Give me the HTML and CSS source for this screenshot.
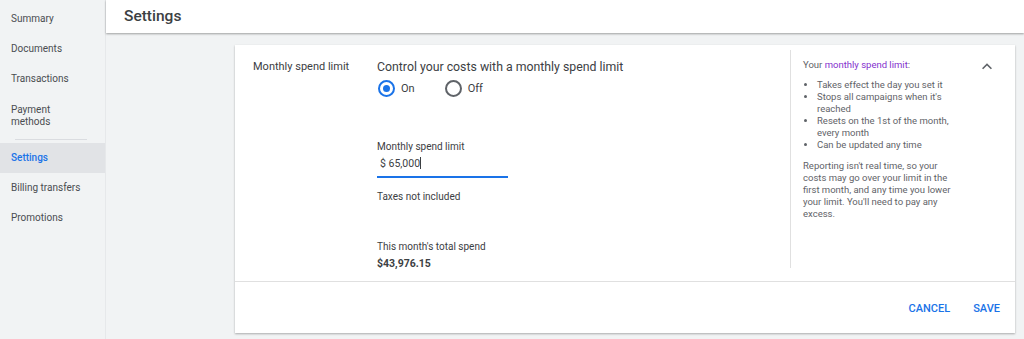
FILE: index.html
```html
<!DOCTYPE html>
<html lang="en">
<head>
    <meta charset="UTF-8">
    <title>Billing settings</title>
    <link rel="stylesheet" href="styles.css">
</head>
<body>
    <div class="sidebar">
        <a href="#" class="side-link">Summary</a>
        <a href="#" class="side-link">Documents</a>
        <a href="#" class="side-link">Transactions</a>
        <a href="#" class="side-link two-line">Payment<br>methods</a>
        <div class="side-sep"></div>
        <a href="#" class="side-link active">Settings</a>
        <a href="#" class="side-link">Billing transfers</a>
        <a href="#" class="side-link">Promotions</a>
    </div>
    <div class="main">
        <div class="header">Settings</div>
        <div class="content">
            <div class="card">
                <div class="card-body">
                    <div class="row-label">Monthly spend limit</div>
                    <div class="row-main">
                        <div class="lead">Control your costs with a monthly spend limit</div>
                        <div class="radios">
                            <label class="radio checked"><span class="dot"></span>On</label>
                            <label class="radio"><span class="dot"></span>Off</label>
                        </div>
                        <div class="field">
                            <div class="field-label">Monthly spend limit</div>
                            <div class="field-input">$ 65,000<span class="caret"></span></div>
                        </div>
                        <div class="hint">Taxes not included</div>
                        <div class="total-label">This month's total spend</div>
                        <div class="total">$43,976.15</div>
                    </div>
                    <div class="aside">
                        <div class="aside-title">Your <span class="accent">monthly spend limit</span>:</div>
                        <ul>
                            <li>Takes effect the day you set it</li>
                            <li>Stops all campaigns when it's reached</li>
                            <li>Resets on the 1st of the month, every month</li>
                            <li>Can be updated any time</li>
                        </ul>
                        <p>Reporting isn't real time, so your costs may go over your limit in the first month, and any time you lower your limit. You'll need to pay any excess.</p>
                    </div>
                    <div class="collapse">
                        <svg width="10" height="7" viewBox="0 0 12 8"><path d="M1.4 7.4 6 2.8l4.6 4.6L12 6 6 0 0 6z" fill="#5f6368"/></svg>
                    </div>
                </div>
                <div class="card-footer">
                    <a href="#" class="btn">CANCEL</a>
                    <a href="#" class="btn">SAVE</a>
                </div>
            </div>
        </div>
    </div>
</body>
</html>
```
FILE: styles.css
```css
body {
    margin: 0;
    font-family: Roboto, "Liberation Sans", sans-serif;
    background: #f1f3f4;
    color: #3c4043;
    display: flex;
    height: 339px;
    overflow: hidden;
}
.sidebar {
    width: 105px;
    border-right: 1px solid #e6e8ea;
    padding-top: 4px;
    display: flex;
    flex-direction: column;
}
.side-link {
    display: block;
    height: 30px;
    line-height: 30px;
    padding-left: 11px;
    font-size: 10px;
    color: #4a4d51;
    text-decoration: none;
}
.side-link.two-line {
    height: 32px;
    line-height: 12px;
    padding-top: 10px;
}
.side-link.active {
    background: #e1e3e6;
    color: #1a73e8;
    font-weight: 500;
}
.side-sep {
    height: 1px;
    background: #dadce0;
    margin: 3px 18px 3px 15px;
}
.main {
    flex: 1;
    display: flex;
    flex-direction: column;
}
.header {
    height: 33px;
    line-height: 32px;
    background: #fff;
    padding-left: 18px;
    font-size: 15.5px;
    font-weight: 500;
    color: #3c4043;
    box-shadow: 0 1px 2px rgba(0, 0, 0, 0.35);
}
.content {
    padding: 12px 9px 0 129px;
}
.card {
    background: #fff;
    box-shadow: 0 1px 2px rgba(0, 0, 0, 0.3);
}
.card-body {
    display: flex;
    height: 236px;
    border-bottom: 1px solid #e0e0e0;
}
.row-label {
    width: 124px;
    padding: 15px 0 0 18px;
    font-size: 11px;
    color: #3c4043;
}
.row-main {
    width: 413px;
    padding-top: 15px;
    font-size: 10px;
}
.lead {
    font-size: 12.3px;
    line-height: 15px;
}
.radios {
    display: flex;
    margin-top: 3px;
    height: 20px;
    align-items: center;
    font-size: 11px;
}
.radio {
    display: flex;
    align-items: center;
    margin-right: 29px;
    color: #3c4043;
}
.dot {
    width: 13px;
    height: 13px;
    border: 2px solid #5f6368;
    border-radius: 50%;
    margin: 0 6px 0 1px;
    box-sizing: content-box;
    position: relative;
}
.radio.checked .dot {
    border-color: #1a73e8;
}
.radio.checked .dot::after {
    content: "";
    position: absolute;
    left: 3px;
    top: 3px;
    width: 7px;
    height: 7px;
    border-radius: 50%;
    background: #1a73e8;
}
.field {
    margin-top: 42px;
    width: 131px;
}
.field-label {
    line-height: 14px;
}
.field-input {
    padding: 2px 0 5px 3px;
    height: 15px;
    line-height: 15px;
    font-size: 10.5px;
    border-bottom: 2px solid #1a73e8;
    color: #3c4043;
}
.caret {
    display: inline-block;
    width: 1px;
    height: 12px;
    background: #3c4043;
    vertical-align: -2px;
}
.hint {
    margin-top: 12px;
    line-height: 14px;
}
.total-label {
    margin-top: 36px;
    line-height: 14px;
}
.total {
    margin-top: 3px;
    font-size: 10.5px;
    font-weight: 700;
    line-height: 14px;
}
.aside {
    width: 176px;
    margin: 5px 0 13px;
    border-left: 1px solid #e0e0e0;
    padding: 9px 0 0 12px;
    font-size: 9.5px;
    line-height: 12px;
    color: #5f6368;
}
.accent {
    color: #8430ce;
}
.aside ul {
    margin: 8px 0 0;
    padding-left: 14px;
    width: 150px;
}
.aside p {
    margin: 9px 0 0;
    width: 150px;
}
.collapse {
    padding: 18px 0 0 3px;
}
.collapse svg {
    display: block;
}
.card-footer {
    height: 50px;
    display: flex;
    justify-content: flex-end;
    align-items: center;
    padding-right: 15px;
    padding-top: 1px;
}
.btn {
    color: #1a73e8;
    font-size: 11px;
    font-weight: 500;
    text-decoration: none;
    margin-left: 23px;
}
```
